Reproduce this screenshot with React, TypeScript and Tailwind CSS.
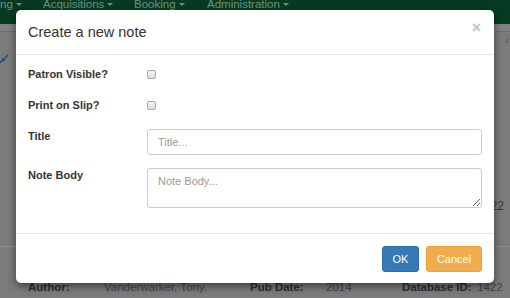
import React from 'react';

const font = { fontFamily: '"Liberation Sans", Arial, sans-serif' };

const Caret: React.FC = () => (
  <span className="inline-block ml-[3px] align-middle w-0 h-0 border-x-[3px] border-t-[3px] border-x-transparent border-t-current" />
);

const Checkbox: React.FC = () => (
  <span className="inline-block w-[9px] h-[9px] rounded-[2px] border border-[#a9a9a9] bg-gradient-to-b from-[#f4f4f4] to-[#dcdcdc]" />
);

const Row: React.FC<{ label: string; children: React.ReactNode; className?: string }> = ({ label, children, className }) => (
  <div className={`flex ${className ?? ''}`}>
    <label className="w-[119px] shrink-0 text-[11px] leading-[14px] font-bold text-[#333]">{label}</label>
    <div className="flex-1">{children}</div>
  </div>
);

const App: React.FC = () => {
  return (
    <div className="relative w-[510px] h-[298px] overflow-hidden bg-[#7b7b7b]" style={font}>
      {/* page behind the backdrop */}
      <div className="flex flex-col h-full">
        <div className="h-[25px] shrink-0 bg-[#073a22] flex items-start text-[11.5px] leading-[11px] text-[#6f9380] -mt-[1px]">
          <span className="w-[43px] whitespace-nowrap">ng<Caret /></span>
          <span className="w-[91px] whitespace-nowrap">Acquisitions<Caret /></span>
          <span className="w-[73px] whitespace-nowrap">Booking<Caret /></span>
          <span className="whitespace-nowrap">Administration<Caret /></span>
        </div>
        <div className="h-[8px] shrink-0 border-b border-[#6d6d6d] bg-[#808080]" />
        <div className="h-[21px] shrink-0 flex justify-end pr-[1px] text-[11px] text-[#555]">‹</div>
        <div className="h-[12px] shrink-0 flex items-center">
          <svg width="10" height="10" viewBox="0 0 10 10" className="-ml-[1px]">
            <path d="M1 9 L5 5 M3 5 H5 V7 M9 1 L6 4" stroke="#2c4a66" strokeWidth="1.6" fill="none" />
          </svg>
        </div>
        <div className="h-[134px] shrink-0" />
        <div className="h-[14px] shrink-0 flex justify-end pr-[6px] text-[12px] leading-[14px] text-[#333]">1422</div>
        <div className="h-[34px] shrink-0 border-b border-[#8c8c8c]" />
        <div className="h-[33px] shrink-0" />
        <div className="flex items-center text-[11.5px] leading-[14px] text-[#2d2d2d]">
          <span className="ml-[28px] w-[76px] font-bold">Author:</span>
          <span className="w-[146px] text-[#444]">Vanderwarker, Tony.</span>
          <span className="w-[76px] font-bold">Pub Date:</span>
          <span className="w-[76px] text-[#444]">2014</span>
          <span className="w-[75px] font-bold">Database ID:</span>
          <span className="text-[#444]">1422</span>
        </div>
      </div>

      {/* modal */}
      <div className="absolute left-[16px] top-[10px] w-[478px] rounded-[5px] bg-white shadow-[0_3px_9px_rgba(0,0,0,0.5)]">
        <div className="flex items-center justify-between px-[12px] py-[12px] border-b border-[#e5e5e5]">
          <h4 className="text-[14.5px] leading-[20px] text-[#333]">Create a new note</h4>
          <button className="text-[16px] leading-[16px] font-bold text-[#c4c4c4] -mt-[9px] mr-[1px]">×</button>
        </div>

        <div className="px-[12px] pt-[12px] pb-[25px] flex flex-col">
          <Row label="Patron Visible?">
            <div className="h-[14px] flex items-center"><Checkbox /></div>
          </Row>
          <Row label="Print on Slip?" className="mt-[17px]">
            <div className="h-[14px] flex items-center"><Checkbox /></div>
          </Row>
          <Row label="Title" className="mt-[17px]">
            <input
              placeholder="Title..."
              className="w-full h-[26px] px-[10px] rounded-[3px] border border-[#ccc] text-[11px] text-[#555] placeholder:text-[#999] outline-none"
            />
          </Row>
          <Row label="Note Body" className="mt-[13px]">
            <textarea
              placeholder="Note Body..."
              className="block w-full h-[40px] px-[10px] py-[5px] rounded-[3px] border border-[#ccc] text-[11px] leading-[14px] text-[#555] placeholder:text-[#999] outline-none"
            />
          </Row>
        </div>

        <div className="flex justify-end gap-[7px] px-[12px] pt-[12px] pb-[11px] border-t border-[#e5e5e5]">
          <button className="w-[37px] h-[26px] rounded-[3px] bg-[#337ab7] border border-[#2e6da4] text-white text-[11px]">OK</button>
          <button className="w-[56px] h-[26px] rounded-[3px] bg-[#f0ad4e] border border-[#eea236] text-white text-[11px]">Cancel</button>
        </div>
      </div>
    </div>
  );
};

export default App;
